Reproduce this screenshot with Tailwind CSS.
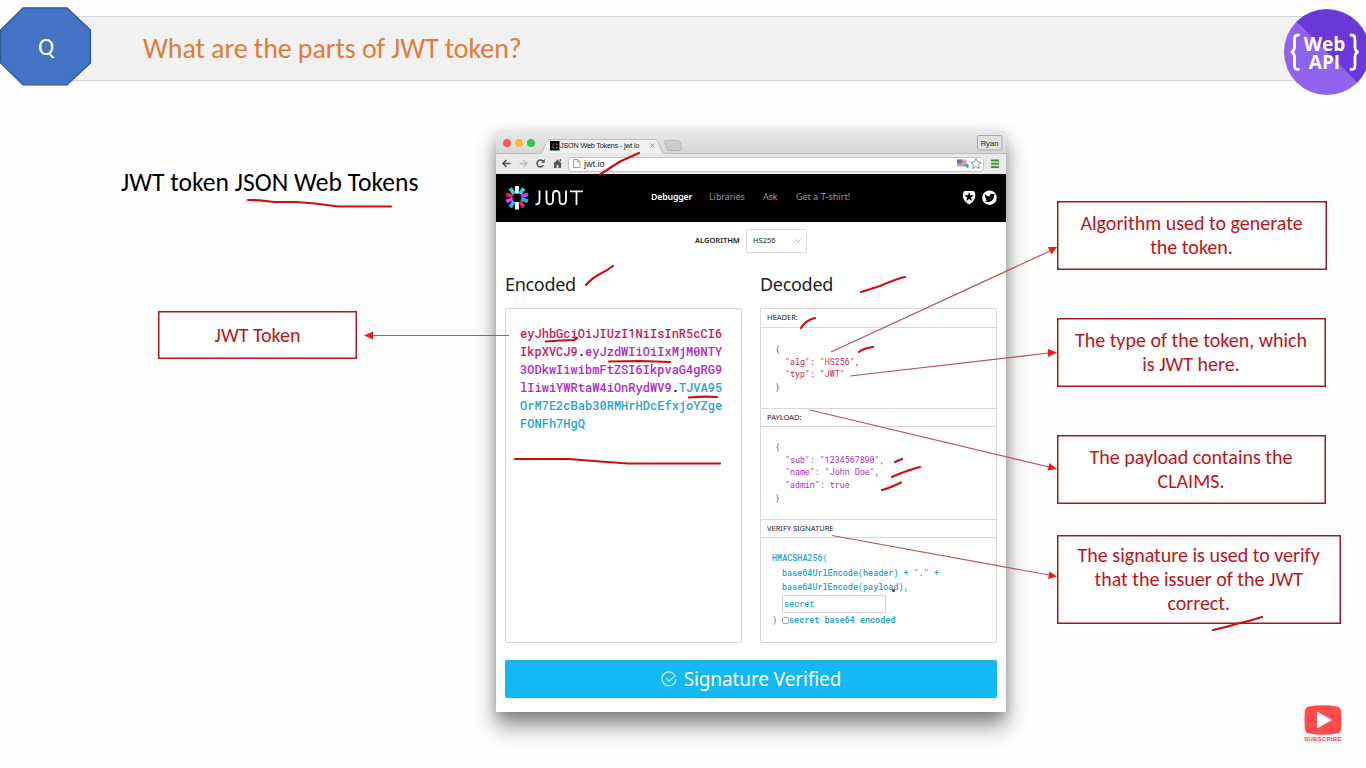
<!DOCTYPE html>
<html lang="en">
<head>
<meta charset="utf-8">
<title>What are the parts of JWT token?</title>
<script src="https://cdn.jsdelivr.net/npm/@tailwindcss/browser@4"></script>
</head>
<body class="bg-[#fefefe]">
<div class="relative w-[1366px] h-[768px] overflow-hidden flex flex-col font-['Carlito','Lato',sans-serif]">

  <!-- Title bar -->
  <header class="relative h-[130px] shrink-0 pt-4">
    <div class="h-[65px] ml-[60px] mr-[20px] bg-[#f1f1f1] border-y border-[#d5d5d5] flex items-center pl-[83px]">
      <h1 class="text-[28px] leading-none whitespace-nowrap text-[#e07b39] tracking-[-0.08px]">What are the parts of JWT token?</h1>
    </div>
    <svg class="absolute left-0 top-[7px]" width="92" height="79" viewBox="0 0 92 79">
      <path d="M23 .8H67L90.500 23V56L67 78H23L.5 56V23Z" fill="#4472c4" stroke="#2f5597" stroke-width="1.200"/>
    </svg>
    <div class="absolute left-0 top-[7px] w-[92px] h-[79px] flex items-center justify-center text-white text-[24px] leading-none">Q</div>
    <svg class="absolute left-[1284px] top-[9px]" width="86" height="86" viewBox="0 0 86 86">
      <circle cx="43" cy="43" r="43" fill="#8f63ec"/>
      <path d="M12.600 12.600A43 43 0 0 1 73.400 73.400Z" fill="#6a37d9"/>
      <g fill="none" stroke="#fff" stroke-width="2.800" stroke-linecap="round">
        <path d="M14.500 26C10.500 26 10.500 28 10.500 32V38C10.500 41 9.500 42.500 7 43C9.500 43.500 10.500 45 10.500 48V55C10.500 59 10.500 60.500 14.500 60.500"/>
        <path d="M67 26C71 26 71 28 71 32V38C71 41 72 42.500 74.500 43C72 43.500 71 45 71 48V55C71 59 71 60.500 67 60.500"/>
      </g>
    </svg>
    <div class="absolute left-[1284px] top-[35px] w-[82px] pr-px text-center text-white font-bold font-['Open_Sans',sans-serif] text-[19px] leading-[18px]">Web<br>API</div>
  </header>

  <main class="flex flex-1">
    <!-- Left column -->
    <section class="w-[496px] shrink-0 pt-[38px]">
      <p class="pl-[121px] h-[30px] flex items-center text-[25.600px] leading-none whitespace-nowrap text-black">JWT token JSON Web Tokens</p>
      <div class="mt-[113px] ml-[158px] w-[199px] h-[48px] inset-ring-[1.5px] inset-ring-[#b3161c] bg-white flex items-center justify-center text-[20px] leading-none text-[#c01318]">JWT Token</div>
    </section>

    <!-- Browser window -->
    <section class="w-[510px] h-[582px] shrink-0 bg-white rounded-t shadow-[0_14px_22px_rgba(0,0,0,0.44),0_4px_12px_rgba(0,0,0,0.16)] font-['Noto_Sans',sans-serif] flex flex-col">
      <div class="h-[24px] rounded-t bg-linear-to-b from-[#eaeaea] to-[#d6d6d6] flex items-end relative">
        <svg class="absolute left-0 top-0" width="510" height="24" viewBox="0 0 510 24">
          <circle cx="11" cy="13" r="4" fill="#f95c56"/><circle cx="23" cy="13" r="4" fill="#fbb931"/><circle cx="35" cy="13" r="4" fill="#34c648"/>
          <path d="M0 23.500H44C48 23.500 49 9.500 53.500 9.500H159C163.500 9.500 164 23.500 169 23.500H510" fill="#f1f1f1" stroke="#b2b2b2" stroke-width=".8"/>
          <path d="M169.500 10.500H181C183 10.500 184 11 184.500 13L186 18.500Q186.500 20.500 184.500 20.500H173.500Q171.500 20.500 171 18.500L168.500 12.500Q168 10.500 169.500 10.500Z" fill="#cbcbcb" stroke="#aaa" stroke-width=".7"/>
          <rect x="54" y="11" width="9.500" height="9.500" fill="#050505"/>
          <path d="M56.500 15.500L58 13.500M60 13.500L61.500 15" stroke="#e25" stroke-width="1.200"/><path d="M56.500 16.500L58 18.500M61.500 16.500L60 18.500" stroke="#1bc" stroke-width="1.200"/>
          <path d="M154.500 13.500L158.500 17.500M158.500 13.500L154.500 17.500" stroke="#777" stroke-width=".8"/>
          <rect x="481.500" y="5.500" width="24.500" height="14.500" rx="1.500" fill="#e2e2e2" stroke="#a6a6a6"/>
        </svg>
        <span class="relative ml-[64px] mb-[3px] w-[80px] whitespace-nowrap text-[7.300px] leading-[11px] text-[#222] tracking-[-0.22px] font-['Liberation_Sans',sans-serif]">JSON Web Tokens - jwt.io</span>
        <span class="relative ml-auto mr-[4px] mb-[5px] w-[25px] text-center text-[7.600px] leading-[11px] text-[#222] font-['Liberation_Sans',sans-serif]">Ryan</span>
      </div>
      <div class="h-[20px] bg-[#e9e9e9] flex items-center relative">
        <div class="ml-[72px] mr-[22px] h-[15px] flex-1 bg-white border border-[#c4c4c4] rounded-sm pl-[15px] flex items-center text-[9px] leading-none text-[#222] font-['Liberation_Sans',sans-serif]">jwt.io</div>
        <svg class="absolute left-0 top-0" width="510" height="20" viewBox="0 0 510 20" fill="none">
          <path d="M14.500 9.500H7M10.500 6L7 9.500L10.500 13" stroke="#555" stroke-width="1.700"/>
          <path d="M23.500 9.500H31M27.500 6L31 9.500L27.500 13" stroke="#bdbdbd" stroke-width="1.300"/>
          <path d="M47.300 7.300A3.500 3.500 0 1 0 47.500 11.200" stroke="#555" stroke-width="1.500"/><path d="M48.800 5V8.800H45Z" fill="#555"/>
          <path d="M57 10L61.500 5.500L66 10H65V14H62.500V11H60.500V14H58V10ZM63.700 5H65V8L63.700 7Z" fill="#555"/>
          <path d="M77.500 5.500H81.500L84 8V13.500H77.500ZM81.500 5.500V8H84" stroke="#8b8b8b" stroke-width=".8"/>
          <rect x="461" y="5.500" width="9.500" height="7" fill="#e9a8a8"/><rect x="461" y="5.500" width="5" height="4" fill="#5577c5"/><path d="M461 11H470.500M466 8H470.500" stroke="#d66" stroke-width=".8"/><path d="M468 11L472 14V10Z" fill="#37a9e6" stroke="#37a9e6"/>
          <path d="M480 4.500L481.500 8.100L485.400 8.400L482.400 10.900L483.400 14.600L480 12.600L476.600 14.600L477.600 10.900L474.600 8.400L478.500 8.100Z" fill="#fff" stroke="#888" stroke-width=".9"/>
          <path d="M495 6.500H503M495 9.700H503M495 13H503" stroke="#3b9a27" stroke-width="1.900"/>
        </svg>
      </div>

      <nav class="h-[48px] pb-[2px] bg-black flex items-center relative text-[8.800px] leading-none text-[#9d9d9d] whitespace-nowrap">
        <svg class="absolute left-[8px] top-[10px]" width="82" height="28" viewBox="0 0 82 28" fill="none">
          <g stroke-width="3.800">
            <path d="M13 2V9.500M13 18V25.500" stroke="#fff"/>
            <path d="M15.800 10L19.800 4.300" stroke="#18d8e8"/><path d="M10.200 10L6.200 4.300" stroke="#26d7e0"/>
            <path d="M17.200 12.400L24 10.200" stroke="#d03cf2"/><path d="M8.800 12.400L2 10.200" stroke="#ef2056"/>
            <path d="M17.200 15.100L24 17.300" stroke="#22aef2"/><path d="M8.800 15.100L2 17.300" stroke="#c844f4"/>
            <path d="M15.800 17.500L19.800 23.200" stroke="#ee2257"/><path d="M10.200 17.500L6.200 23.200" stroke="#23b9f4"/>
          </g>
          <g stroke="#fff" stroke-width="1.800">
            <path d="M35.500 6.500V16.500Q35.500 20.500 31.500 20.500"/>
            <path d="M42.500 6.500V16Q42.500 20.300 45.800 20.300T49 16V11Q49 7 52.200 7T55.500 11V16Q55.500 20.300 58.700 20.300T62 16V6.500"/>
            <path d="M66 7.300H79M72.500 7.300V21"/>
          </g>
        </svg>
        <span class="ml-[155px] w-[58px] text-white font-semibold tracking-[-0.2px]">Debugger</span>
        <span class="w-[54px]">Libraries</span>
        <span class="w-[33px]">Ask</span>
        <span class="tracking-[0.12px]">Get a T-shirt!</span>
        <svg class="absolute left-[466px] top-[15px]" width="36" height="17" viewBox="0 0 36 17">
          <path d="M3 2H11Q13.500 2 13.300 7Q13 12 7.200 15.500Q1 12 .9 7Q1 2 3 2Z" fill="#fff"/>
          <path d="M7.100 2.800L8.200 6.300H12L9 8.500L10.100 12L7.100 9.900L4.100 12L5.200 8.500L2.200 6.300H6Z" fill="#000"/>
          <circle cx="27.500" cy="8.700" r="7.300" fill="#fff"/>
          <path d="M23 5.300C24.500 7 26 7.500 27.600 7.500C27.300 4.500 30 4 31.200 5.300L33 4.800L32 6.500C32.200 10.500 29 13 26 12.900Q24 12.900 22.500 11.900Q24.300 12 25.400 11.200Q23.800 10.900 23.500 9.700H24.500Q22.900 9 22.900 7.500L23.700 7.700Q22.300 6.700 23 5.300Z" fill="#000"/>
        </svg>
      </nav>

      <div class="flex-1 flex flex-col px-[9px] text-[#222]">
        <div class="h-[37px] flex items-center pl-[190px] text-[7.500px] leading-none">
          <span class="w-[51px] font-semibold whitespace-nowrap">ALGORITHM</span>
          <span class="w-[61px] h-[24px] border border-[#ddd] rounded-xs flex items-center justify-between pl-[6px] pr-[5px]">HS256
            <svg width="6" height="4" viewBox="0 0 6 4" fill="none"><path d="M.5 .5L3 3L5.500 .5" stroke="#999" stroke-width=".8"/></svg>
          </span>
        </div>
        <div class="flex gap-[18px]">
          <!-- Encoded token -->
          <div class="w-[237px]">
            <h2 class="h-[49px] pt-[15px] text-[18px] leading-[20px] tracking-[-0.3px]">Encoded</h2>
            <div class="h-[335px] border border-[#d8d8d8] rounded-xs pl-[14px] pt-[15px] font-['Roboto_Mono','Liberation_Mono',monospace] text-[12px] leading-[18px] tracking-[0.02px] font-medium whitespace-nowrap text-[#ae2bcb]">
              <div class="text-[#cb1757]">eyJhbGciOiJIUzI1NiIsInR5cCI6</div>
              <div><span class="text-[#cb1757]">IkpXVCJ9</span><span class="text-black">.</span>eyJzdWIiOiIxMjM0NTY</div>
              <div>3ODkwIiwibmFtZSI6IkpvaG4gRG9</div>
              <div>lIiwiYWRtaW4iOnRydWV9<span class="text-black">.</span><span class="text-[#1ea5d8]">TJVA95</span></div>
              <div class="text-[#1ea5d8]">OrM7E2cBab30RMHrHDcEfxjoYZge</div>
              <div class="text-[#1ea5d8]">FONFh7HgQ</div>
            </div>
          </div>
          <!-- Decoded token -->
          <div class="w-[237px]">
            <h2 class="h-[49px] pt-[15px] text-[18px] leading-[20px] tracking-[-0.3px]">Decoded</h2>
            <div class="h-[335px] border border-[#d8d8d8] rounded-xs text-[7.500px]">
              <div class="h-[19px] border-b border-[#d8d8d8] pl-[6px] leading-[17px]">HEADER:</div>
              <pre class="h-[80px] pt-[15px] pl-[14px] font-['Roboto_Mono','Liberation_Mono',monospace] text-[8.300px] leading-[12.700px] text-[#cb1757]">{
  "alg": "HS256",
  "typ": "JWT"
}</pre>
              <div class="h-[19px] border-y border-[#d8d8d8] pl-[6px] leading-[16px]">PAYLOAD:</div>
              <pre class="h-[92px] pt-[14px] pl-[14px] font-['Roboto_Mono','Liberation_Mono',monospace] text-[8.300px] leading-[12.700px] text-[#ae2bcb]">{
  "sub": "1234567890",
  "name": "John Doe",
  "admin": true
}</pre>
              <div class="h-[19px] border-y border-[#d8d8d8] pl-[6px] leading-[17px]">VERIFY SIGNATURE</div>
              <div class="pl-[11px] pt-[13px] font-['Roboto_Mono','Liberation_Mono',monospace] text-[8.450px] leading-[14.500px] text-[#1ea5d8] font-medium whitespace-nowrap">
                <div>HMACSHA256(</div>
                <div class="pl-[10px]">base64UrlEncode(header) + "." +</div>
                <div class="pl-[10px]">base64UrlEncode(payload),</div>
                <div class="ml-[10px] w-[104px] h-[18px] border border-[#d0d0d0] rounded-xs pl-px leading-[15px]">secret</div>
                <div class="flex items-center h-[16px]"><span class="w-[10px]">)</span><span class="w-[7px] h-[7px] border border-[#aaa] rounded-xs"></span><span class="font-bold">secret base64 encoded</span></div>
              </div>
            </div>
          </div>
        </div>
        <div class="mt-[17px] h-[38px] bg-[#13b8f4] rounded-xs flex items-center justify-center gap-[7px] text-white text-[19px] leading-none whitespace-nowrap">
          <svg width="16" height="16" viewBox="0 0 16 16" fill="none" stroke="#d5f3fd" stroke-width="1.100"><path d="M13.500 3.500A7 7 0 1 0 15 8M5 7L8 10.300L15 3.800"/></svg>
          <span class="tracking-[-0.1px]">Signature Verified</span>
        </div>
      </div>
    </section>

    <!-- Explanations -->
    <section class="pl-[50.500px] pt-[70.500px] text-center text-[20px] leading-[24px] text-[#c01318] whitespace-nowrap">
      <div class="w-[270px] h-[69px] inset-ring-[1.5px] inset-ring-[#a31620] bg-white flex items-center justify-center"><p>Algorithm used to generate<br>the token.</p></div>
      <div class="mt-[48px] w-[269px] h-[69px] inset-ring-[1.5px] inset-ring-[#a31620] bg-white flex items-center justify-center"><p>The type of the token, which<br>is JWT here.</p></div>
      <div class="mt-[48px] w-[269px] h-[69px] inset-ring-[1.5px] inset-ring-[#a31620] bg-white flex items-center justify-center"><p>The payload contains the<br>CLAIMS.</p></div>
      <div class="mt-[31px] w-[284.500px] h-[89px] inset-ring-[1.5px] inset-ring-[#a31620] bg-white flex items-center justify-center"><p>The signature is used to verify<br>that the issuer of the JWT<br>correct.</p></div>
    </section>
  </main>

  <!-- Subscribe badge -->
  <div class="absolute left-[1303px] top-[704px] w-[40px] h-[39px] bg-[#f7f7f7] flex flex-col items-center">
    <svg class="mt-px" width="38" height="30" viewBox="0 0 38 30"><path d="M5 1.500Q19-1 33 1.500Q36.500 2 37 6Q38 15 37 24Q36.500 28 33 28.500Q19 31 5 28.500Q1.500 28 1 24Q0 15 1 6Q1.500 2 5 1.500Z" fill="#ff4b4b"/><path d="M13 6.500V23.500L28 15Z" fill="#fff"/></svg>
    <span class="text-[6px] leading-[8px] tracking-[0.25px] font-bold text-[#f14a4a] font-['Liberation_Sans',sans-serif]">SUBSCRIBE</span>
  </div>

  <!-- Arrows and pen marks -->
  <svg class="absolute inset-0" width="1366" height="768" viewBox="0 0 1366 768" fill="none">
    <g stroke="#bd5058" stroke-width="1.200">
      <path d="M509 335.500H372M831 352L1050 251M850 376L1049 353M810 410L1049 467M832 535.500L1049 575"/>
    </g>
    <g fill="#ee1c14">
      <path d="M364 335.500L373 331.500V339.500Z"/><path d="M1057 247L1048 247L1051.500 254.500Z"/><path d="M1057 352.500L1048 349V357Z"/><path d="M1057 469L1049.500 463L1047.500 470.500Z"/><path d="M1057 576.500L1049.500 571.500L1048 579Z"/>
    </g>
    <g stroke="#cf0d0d" stroke-width="2.200" stroke-linecap="round" stroke-linejoin="round">
      <path d="M248 200L260 200.300L274 202H296L315 203.500L338 206.500H391"/>
      <path d="M600 174.500L620 161.500L639 153"/>
      <path d="M586 285Q592 278 600 274T613 266"/>
      <path d="M861 292L880 286Q896 279 905 277"/>
      <path d="M801 328Q806 320 815 318"/>
      <path d="M859 352Q864 348 873 347"/>
      <path d="M546 341.500L560 340.500L574 340L577 338"/>
      <path d="M609 361.500L640 361L670 362"/>
      <path d="M689 397.500Q704 396 717 397"/>
      <path d="M515 459H569L600 461.500L628 463.500H720"/>
      <path d="M895 462L902 459M892 477Q902 472 920 467M882 490Q890 488 901 482.500"/>
      <path d="M1213 630Q1227 627 1238 623.500Q1250 621 1262 617"/>
    </g>
    <circle cx="893.500" cy="590.500" r="1.500" fill="#b0122a"/>
  </svg>
</div>
</body>
</html>
